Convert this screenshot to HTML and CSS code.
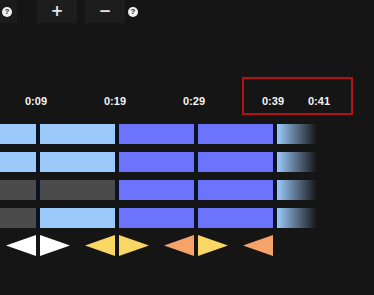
FILE: index.html
```html
<!DOCTYPE html>
<html lang="en">
<head>
    <meta charset="UTF-8">
    <meta name="viewport" content="width=device-width, initial-scale=1.0">
    <title>Timeline</title>
    <link rel="stylesheet" href="styles.css">
</head>
<body>

<div class="toolbar">
    <div class="stub"><span class="help">?</span></div>
    <button class="zoom-btn">+</button>
    <button class="zoom-btn">&minus;</button>
    <span class="help">?</span>
</div>

<div class="ticks">
    <span class="tick">0:09</span>
    <span class="tick">0:19</span>
    <span class="tick">0:29</span>
    <span class="tick short">0:39</span>
    <span class="tick">0:41</span>
    <div class="highlight"></div>
</div>

<div class="tracks">
    <div class="track">
        <div class="cell light"></div>
        <div class="cell light"></div>
        <div class="cell blue"></div>
        <div class="cell blue"></div>
        <div class="cell fade"></div>
    </div>
    <div class="track">
        <div class="cell light"></div>
        <div class="cell light"></div>
        <div class="cell blue"></div>
        <div class="cell blue"></div>
        <div class="cell fade"></div>
    </div>
    <div class="track">
        <div class="cell gray"></div>
        <div class="cell gray"></div>
        <div class="cell blue"></div>
        <div class="cell blue"></div>
        <div class="cell fade"></div>
    </div>
    <div class="track">
        <div class="cell gray"></div>
        <div class="cell light"></div>
        <div class="cell blue"></div>
        <div class="cell blue"></div>
        <div class="cell fade"></div>
    </div>
</div>

<div class="markers">
    <div class="slot">
        <span class="tri left white"></span>
        <span class="tri right white"></span>
    </div>
    <div class="slot">
        <span class="tri left yellow"></span>
        <span class="tri right yellow"></span>
    </div>
    <div class="slot">
        <span class="tri left orange"></span>
        <span class="tri right yellow"></span>
    </div>
    <div class="slot">
        <span class="tri left orange"></span>
        <span class="tri right empty"></span>
    </div>
</div>

</body>
</html>
```

FILE: styles.css
```css
body {
    margin: 0;
    background-color: #151515;
    font-family: "Liberation Sans", Arial, sans-serif;
    overflow: hidden;
}

.toolbar {
    display: flex;
    align-items: center;
    height: 23px;
}

.stub {
    width: 17px;
    height: 23px;
    background-color: #1b1b1b;
    display: flex;
    align-items: center;
    padding-left: 2px;
    box-sizing: border-box;
}

.zoom-btn {
    width: 40px;
    height: 23px;
    margin-left: 20px;
    padding: 0;
    border: none;
    background-color: #1d1d1d;
    color: #e6e6e6;
    font-family: "DejaVu Sans", sans-serif;
    font-size: 15px;
    font-weight: bold;
    line-height: 23px;
}

.zoom-btn + .zoom-btn {
    margin-left: 8px;
}

.help {
    display: inline-block;
    width: 10px;
    height: 10px;
    border-radius: 50%;
    background-color: #f2f2f2;
    color: #151515;
    font-size: 8px;
    font-weight: bold;
    line-height: 10px;
    text-align: center;
}

.toolbar > .help {
    margin-left: 3px;
}

.ticks {
    position: relative;
    display: flex;
    margin-top: 72px;
    padding-left: 25px;
    height: 13px;
    color: #f4f4f4;
    font-size: 11px;
    font-weight: bold;
    line-height: 13px;
}

.tick {
    flex: none;
    width: 79px;
}

.tick.short {
    width: 46px;
}

.highlight {
    position: absolute;
    left: 242px;
    top: -18px;
    width: 111px;
    height: 38px;
    border: 2px solid #b80f14;
    box-sizing: border-box;
}

.tracks {
    margin-top: 16px;
    margin-left: -39px;
    display: flex;
    flex-direction: column;
    gap: 8px;
}

.track {
    display: flex;
    gap: 4px;
    width: 356px;
    background-color: #0b1223;
}

.cell {
    flex: none;
    width: 75px;
    height: 20px;
}

.light {
    background-color: #9bc9fa;
}

.blue {
    background-color: #6c74fe;
}

.gray {
    background-color: #4b4b4b;
}

.fade {
    width: 40px;
    background: linear-gradient(90deg, #9bc9fa 0%, rgba(155, 201, 250, 0) 100%), #151515;
}

.markers {
    display: flex;
    margin-top: 7px;
    padding-left: 6px;
}

.slot {
    flex: none;
    display: flex;
    gap: 4px;
    width: 79px;
}

.tri {
    width: 30px;
    height: 21px;
}

.tri.left {
    clip-path: polygon(0 50%, 100% 0, 100% 100%);
}

.tri.right {
    clip-path: polygon(0 0, 100% 50%, 0 100%);
}

.white {
    background-color: #ffffff;
}

.yellow {
    background-color: #f8d765;
}

.orange {
    background-color: #f6a36a;
}

.empty {
    visibility: hidden;
}
```
